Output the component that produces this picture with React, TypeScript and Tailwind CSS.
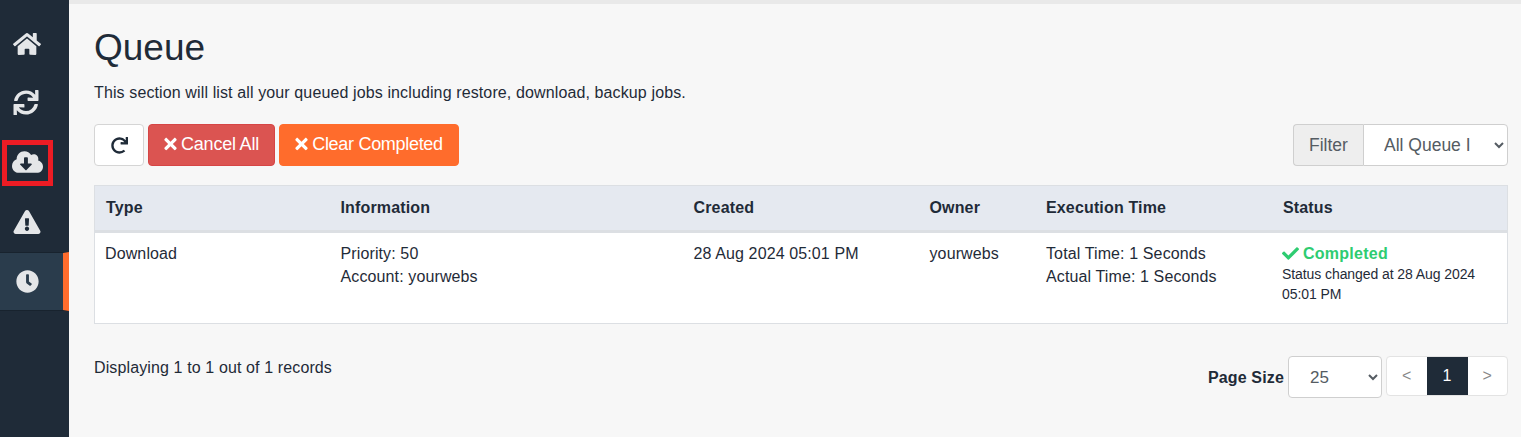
import { FaCheck, FaClock, FaCloudDownloadAlt, FaExclamationTriangle, FaHome, FaRedo, FaSync, FaTimes } from 'react-icons/fa';

const columns = 'grid grid-cols-[234.5px_353px_236px_117.5px_236px_1fr]';

function NavItem({ children, active, boxed }: { children: React.ReactNode; active?: boolean; boxed?: boolean }) {
    return (
        <div
            className={
                active
                    ? 'flex h-[59px] items-center border-y border-y-[#18232e] border-r-[6px] border-r-[#ff6c2c] bg-[#2a3c4c] pl-[16px]'
                    : 'flex h-[59.5px] items-center justify-start pl-[13px]'
            }
        >
            {boxed ? (
                <div className="-ml-[11px] flex h-[46px] w-[51px] items-center justify-center border-[5px] border-[#ed1c24]">{children}</div>
            ) : (
                children
            )}
        </div>
    );
}

export default function App() {
    return (
        <div className="flex h-[437px] w-[1521px] overflow-hidden bg-[#f7f7f7] font-['Liberation_Sans',Arial,sans-serif] text-[16px] tracking-[0.12px] text-[#1f2b38]">
            <aside className="flex w-[69px] shrink-0 flex-col bg-[#1f2b38] pt-[14px] text-[#e4e6e8]">
                <NavItem><FaHome className="h-[26px] w-[28px]" /></NavItem>
                <NavItem><FaSync className="h-[25px] w-[26px] -translate-y-px" /></NavItem>
                <NavItem boxed><FaCloudDownloadAlt className="h-[26px] w-[31px] -translate-y-px" /></NavItem>
                <NavItem><FaExclamationTriangle className="h-[24px] w-[28px]" /></NavItem>
                <NavItem active><FaClock className="h-[23px] w-[23px]" /></NavItem>
            </aside>
            <main className="flex min-w-0 flex-1 flex-col border-t-4 border-t-[#e9e9e9] pl-[25px] pr-[13px]">
                <h1 className="mt-[22px] text-[37px] leading-[43px] tracking-normal text-[#1f2b38]">Queue</h1>
                <p className="mt-[12px] leading-[24px]">This section will list all your queued jobs including restore, download, backup jobs.</p>
                <div className="mt-[19px] flex h-[42px] items-center">
                    <button className="mr-1 flex h-[42px] w-[50px] items-center justify-center rounded border border-[#d5d5d5] bg-white">
                        <FaRedo className="h-[17px] w-[17px]" />
                    </button>
                    <button className="mr-1 flex h-[42px] w-[127px] items-center justify-center gap-[4px] rounded border border-[#d64545] bg-[#db5451] pb-[2px] text-[18px] tracking-[-0.2px] text-white">
                        <FaTimes className="h-[18px] w-[13px]" />Cancel All
                    </button>
                    <button className="flex h-[42px] w-[180px] items-center justify-center gap-[4px] rounded border border-[#ff6c2c] bg-[#ff6c2c] pb-[2px] text-[18px] tracking-[-0.3px] text-white">
                        <FaTimes className="h-[18px] w-[13px]" />Clear Completed
                    </button>
                    <div className="ml-auto flex h-[42px] w-[215px]">
                        <span className="flex w-[70px] items-center justify-center rounded-l border border-r-0 border-[#cfcfcf] bg-[#eeeeee] text-[17.5px] tracking-normal text-[#555c63]">Filter</span>
                        <select className="h-[42px] min-w-0 flex-1 rounded-r border border-[#cfcfcf] bg-white pl-[16px] pr-[21px] text-[17.5px] tracking-normal text-[#555c63]">
                            <option>All Queue Items</option>
                        </select>
                    </div>
                </div>
                <div className="mt-[19px] border border-[#dcdfe3] bg-white">
                    <div className={`${columns} h-[47px] items-center border-b-[3px] border-b-[#dcdfe3] bg-[#e5e9f0] pl-[11px] font-bold tracking-[0.15px]`}>
                        <div>Type</div>
                        <div>Information</div>
                        <div>Created</div>
                        <div>Owner</div>
                        <div className="-ml-px">Execution Time</div>
                        <div>Status</div>
                    </div>
                    <div className={`${columns} h-[90px] pl-[10px] pt-[9px] leading-[23px]`}>
                        <div>Download</div>
                        <div className="pl-px">Priority: 50<br />Account: yourwebs</div>
                        <div className="pl-px">28 Aug 2024 05:01 PM</div>
                        <div className="pl-px">yourwebs</div>
                        <div>Total Time: 1 Seconds<br />Actual Time: 1 Seconds</div>
                        <div>
                            <div className="flex items-center gap-[4px] font-bold tracking-[0.25px] text-[#2ecc71]"><FaCheck className="h-[17px] w-[17px]" />Completed</div>
                            <div className="-mt-px pr-[20px] text-[14px] leading-[20px] tracking-[-0.08px]">Status changed at 28 Aug 2024 05:01 PM</div>
                        </div>
                    </div>
                </div>
                <div className="mt-[32px] flex items-start justify-between">
                    <span className="leading-[24px]">Displaying 1 to 1 out of 1 records</span>
                    <div className="flex items-center">
                        <span className="mr-[4px] pt-[2px] font-bold tracking-[0.15px]">Page Size</span>
                        <select className="mr-1 h-[42px] w-[94px] rounded border border-[#cfcfcf] bg-white pl-[17px] text-[17px] tracking-normal text-[#555c63]">
                            <option>25</option>
                        </select>
                        <div className="flex h-[40px] w-[122px] self-start overflow-hidden rounded border border-[#e3e3e3] bg-white text-[16px] text-[#888888]">
                            <span className="flex flex-1 items-center justify-center">&lt;</span>
                            <span className="flex w-[41px] items-center justify-center bg-[#1f2b38] text-white">1</span>
                            <span className="flex flex-1 items-center justify-center">&gt;</span>
                        </div>
                    </div>
                </div>
            </main>
        </div>
    );
}
